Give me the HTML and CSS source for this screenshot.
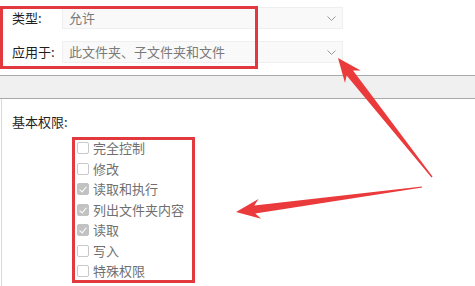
FILE: index.html
```html
<!DOCTYPE html>
<html lang="zh-CN">
<head>
<meta charset="utf-8">
<title>权限项目</title>
<link rel="stylesheet" href="styles.css">
</head>
<body>
<div class="page">
  <div class="top">
    <div class="row">
      <span class="label">类型:</span>
      <div class="combo"><span class="value">允许</span><svg class="chev" width="9" height="5" viewBox="0 0 9 5"><path d="M0.5 0.5 L4.5 4.5 L8.5 0.5" fill="none" stroke="#9a9a9a" stroke-width="1"/></svg></div>
    </div>
    <div class="row">
      <span class="label">应用于:</span>
      <div class="combo"><span class="value">此文件夹、子文件夹和文件</span><svg class="chev" width="9" height="5" viewBox="0 0 9 5"><path d="M0.5 0.5 L4.5 4.5 L8.5 0.5" fill="none" stroke="#9a9a9a" stroke-width="1"/></svg></div>
    </div>
  </div>
  <div class="band"></div>
  <div class="panel">
    <div class="heading">基本权限:</div>
    <ul class="perms">
      <li><span class="box"></span>完全控制</li>
      <li><span class="box"></span>修改</li>
      <li><span class="box checked"></span>读取和执行</li>
      <li><span class="box checked"></span>列出文件夹内容</li>
      <li><span class="box checked"></span>读取</li>
      <li><span class="box"></span>写入</li>
      <li><span class="box"></span>特殊权限</li>
    </ul>
  </div>
  <svg class="marks" width="475" height="286" viewBox="0 0 475 286">
    <rect x="1.5" y="7.5" width="255" height="60" fill="none" stroke="#e2393e" stroke-width="3"/>
    <rect x="73.5" y="138.5" width="120" height="143" fill="none" stroke="#e2393e" stroke-width="3"/>
    <polygon fill="#ea3a3b" points="338,58 360.7,70.6 353,70.4 432.5,176.6 431.5,177.4 346.6,75.5 345,83"/>
    <polygon fill="#ea3a3b" points="236,212 258.5,198.9 254.3,205.5 422,186.4 422.2,187.6 255.3,213.5 261.1,218.7"/>
  </svg>
</div>
</body>
</html>
```
FILE: styles.css
```css
html, body {
  margin: 0;
  padding: 0;
  background: #ffffff;
}
.page {
  position: relative;
  width: 475px;
  height: 286px;
  overflow: hidden;
  font-family: "Noto Sans CJK SC", "Noto Sans", sans-serif;
  font-size: 13px;
  color: #1e1e1e;
}
.top {
  display: flex;
  flex-direction: column;
  gap: 12px;
  padding-top: 7px;
  height: 68px;
  box-sizing: border-box;
}
.row {
  display: flex;
  align-items: center;
  height: 22px;
}
.label {
  width: 50px;
  padding-left: 12px;
  line-height: 22px;
}
.combo {
  width: 281px;
  height: 22px;
  box-sizing: border-box;
  border: 1px solid #efefef;
  background: #f9f9f9;
  display: flex;
  align-items: center;
  justify-content: space-between;
  padding: 0 5px 0 6px;
}
.value {
  color: #7a7a7a;
  line-height: 20px;
}
.chev {
  display: block;
  margin-right: 1px;
}
.band {
  margin-top: 7px;
  height: 22px;
  background: #f0f0f0;
  border-top: 1px solid #a9a9a9;
  border-bottom: 1px solid #a9a9a9;
}
.panel {
  margin-left: 1px;
  border-left: 1px solid #dadada;
  height: 200px;
  padding-top: 13px;
  box-sizing: border-box;
}
.heading {
  padding-left: 10px;
  line-height: 20px;
}
.perms {
  list-style: none;
  margin: 6px 0 0 0;
  padding: 0 0 0 75px;
}
.perms li {
  display: flex;
  align-items: center;
  height: 20.5px;
  color: #6f6f6f;
  line-height: 20px;
}
.box {
  width: 12px;
  height: 12px;
  box-sizing: border-box;
  border: 1px solid #c8c8c8;
  border-radius: 2px;
  margin-right: 4px;
  position: relative;
  background: #ffffff;
}
.box.checked {
  background: #c2c2c2;
  border-color: #c2c2c2;
}
.box.checked::after {
  content: "";
  position: absolute;
  left: 3px;
  top: 1px;
  width: 3px;
  height: 6px;
  border-right: 1.5px solid #ffffff;
  border-bottom: 1.5px solid #ffffff;
  transform: rotate(40deg);
}
.marks {
  position: absolute;
  left: 0;
  top: 0;
  pointer-events: none;
}
```
